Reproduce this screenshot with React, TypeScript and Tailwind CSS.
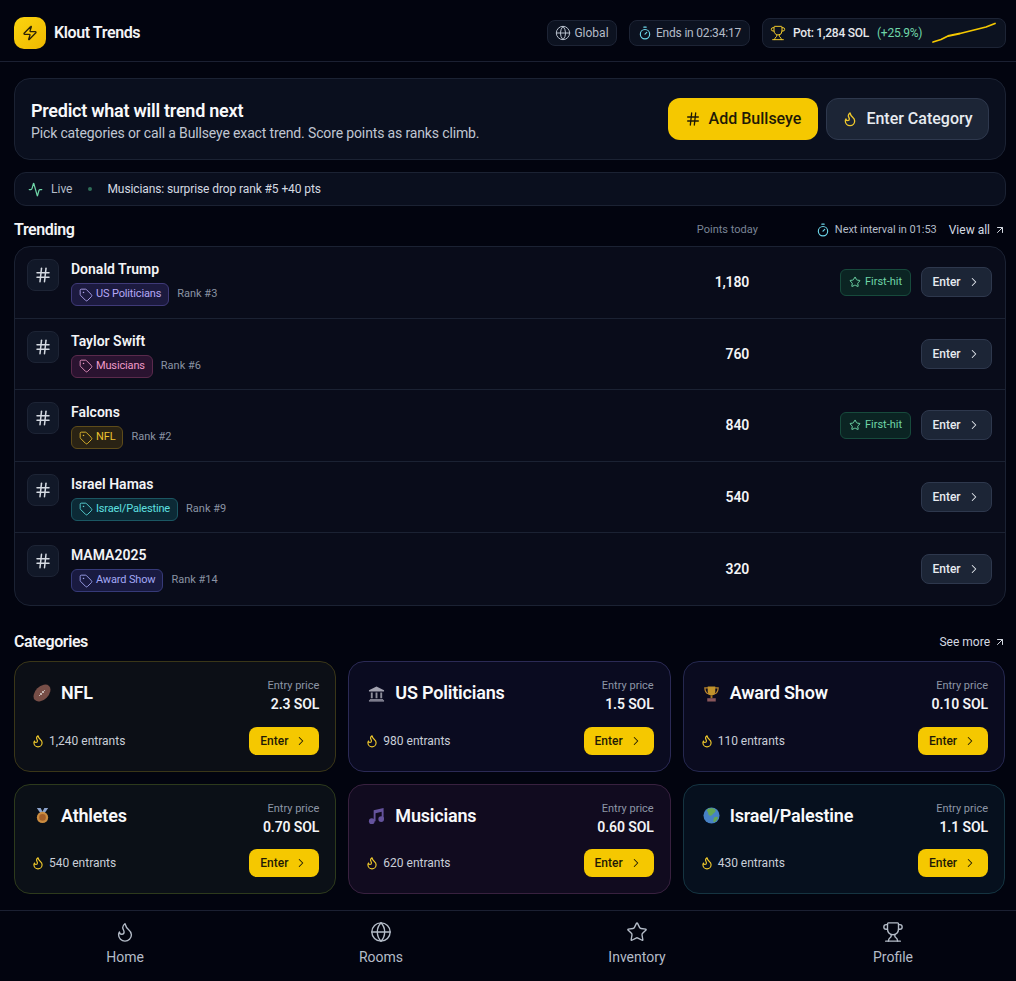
import { Activity, ArrowUpRight, ChevronRight, Flame, Globe, Hash, Star, Tag, Timer, Trophy, Zap } from "lucide-react";
import type { ReactNode } from "react";

const trends = [
  { name: "Donald Trump", cat: "US Politicians", chip: "border-[#3f3a78] bg-[#1c1a3f] text-[#b5a8f5]", rank: 3, pts: "1,180", first: true },
  { name: "Taylor Swift", cat: "Musicians", chip: "border-[#5a2a4c] bg-[#2a1330] text-[#f09ac8]", rank: 6, pts: "760", first: false },
  { name: "Falcons", cat: "NFL", chip: "border-[#5e4c1a] bg-[#2a2314] text-[#eec22f]", rank: 2, pts: "840", first: true },
  { name: "Israel Hamas", cat: "Israel/Palestine", chip: "border-[#1b5763] bg-[#0c2a36] text-[#5ee0e0]", rank: 9, pts: "540", first: false },
  { name: "MAMA2025", cat: "Award Show", chip: "border-[#363a78] bg-[#191a40] text-[#a3a8f5]", rank: 14, pts: "320", first: false },
];

function Football() {
  return (
    <svg width="18" height="18" viewBox="0 0 18 18" className="opacity-85">
      <ellipse cx="9" cy="9" rx="10" ry="6.6" fill="#8a5a50" transform="rotate(-45 9 9)" />
      <path d="M6 12l6-6M7 9l2 2M9 7l2 2" stroke="#e6d3cc" strokeWidth="1" fill="none" />
    </svg>
  );
}

function Bank() {
  return (
    <svg width="17" height="17" viewBox="0 0 18 18" className="opacity-90">
      <path d="M9 1.500L17 5.500V7H1V5.500z" fill="#b4b4c0" />
      <path d="M3 8h2v6H3zM8 8h2v6H8zM13 8h2v6h-2z" fill="#9c9ca8" />
      <path d="M2 15h14v1H2zM1 16.200h16v1.300H1z" fill="#b4b4c0" />
    </svg>
  );
}

function Cup() {
  return (
    <svg width="17" height="17" viewBox="0 0 18 18" className="opacity-80">
      <path d="M2 3h14c0 4-1.500 6-4 6.500H6C3.500 9 2 7 2 3z" fill="none" stroke="#e0a030" strokeWidth="1.400" />
      <path d="M5 1.500h8v5c0 3-2 4.500-4 4.500S5 9.500 5 6.500z" fill="#efb62f" />
      <path d="M8 11h2v3H8z" fill="#c98b22" />
      <path d="M4.500 14h9v3.500h-9z" fill="#a8696a" />
    </svg>
  );
}

function Medal() {
  return (
    <svg width="17" height="17" viewBox="0 0 18 18" className="opacity-90">
      <path d="M3 1h4l3 6H7zM15 1h-4L8 7h3z" fill="#9ab4e0" />
      <circle cx="9" cy="11" r="6" fill="#e09a45" />
      <circle cx="9" cy="11" r="3.500" fill="#b5682a" />
    </svg>
  );
}

function Notes() {
  return (
    <svg width="17" height="17" viewBox="0 0 18 18" className="opacity-80">
      <path d="M6 3.500L16.500 1v11.500h-2V5L8 6.500V15H6z" fill="#7a66bd" />
      <circle cx="4" cy="15" r="3" fill="#7a66bd" />
      <circle cx="14" cy="12.800" r="3" fill="#7a66bd" />
    </svg>
  );
}

function Earth() {
  return (
    <svg width="17" height="17" viewBox="0 0 18 18" className="opacity-90">
      <circle cx="9" cy="9" r="8.500" fill="#4f8fd8" />
      <path d="M5 2c2-1 6-1 8 1 1 2-1 3-2 4s-2 3-4 2-1-3-2-4-1-2 0-3zM12 11c1-1 3-1 4 0-1 3-3 5-5 5 0-2 0-4 1-5z" fill="#6fb85a" />
    </svg>
  );
}

const cats: { icon: ReactNode; name: string; price: string; count: string; card: string }[] = [
  { icon: <Football />, name: "NFL", price: "2.3 SOL", count: "1,240", card: "border-[#3a3618] bg-[#0c0f16]" },
  { icon: <Bank />, name: "US Politicians", price: "1.5 SOL", count: "980", card: "border-[#2b2a55] bg-[#0a0b20]" },
  { icon: <Cup />, name: "Award Show", price: "0.10 SOL", count: "110", card: "border-[#25284f] bg-[#0a0b1f]" },
  { icon: <Medal />, name: "Athletes", price: "0.70 SOL", count: "540", card: "border-[#2d3a1c] bg-[#0b1017]" },
  { icon: <Notes />, name: "Musicians", price: "0.60 SOL", count: "620", card: "border-[#38213f] bg-[#110b1f]" },
  { icon: <Earth />, name: "Israel/Palestine", price: "1.1 SOL", count: "430", card: "border-[#153441] bg-[#06101e]" },
];

const nav = [
  { label: "Home", Icon: Flame },
  { label: "Rooms", Icon: Globe },
  { label: "Inventory", Icon: Star },
  { label: "Profile", Icon: Trophy },
];

export default function App() {
  return (
    <div className="flex h-[981px] flex-col overflow-hidden bg-[#02040f] font-['Roboto',sans-serif] text-white">
      <header className="flex h-[62px] shrink-0 items-center justify-between border-b border-[#1b2032] pl-3.5 pr-2.5 pt-1">
        <div className="flex items-center gap-2">
          <div className="flex h-8 w-8 items-center justify-center rounded-[10px] bg-gradient-to-br from-[#fbd50f] to-[#efb800]">
            <Zap size={16} className="text-[#2a2208]" />
          </div>
          <span className="text-base font-semibold tracking-[-0.4px] text-[#f3f4f6]">Klout Trends</span>
        </div>
        <div className="flex items-center gap-3">
          <div className="flex h-[26px] w-[70px] items-center justify-center gap-[3px] rounded-lg border border-[#1d2435] bg-[#0c1220] text-xs text-[#b4bcc8]">
            <Globe size={16} strokeWidth={1.5} className="text-[#b8c0cc]" />
            Global
          </div>
          <div className="flex h-[26px] w-[121px] items-center justify-center gap-1 rounded-lg border border-[#1d2435] bg-[#0c1220] text-xs tracking-[-0.2px] text-[#b4bcc8]">
            <Timer size={14} className="text-[#6cd5e8]" />
            Ends in 02:34:17
          </div>
          <div className="flex h-[30px] w-[244px] items-center rounded-lg border border-[#1d2435] bg-[#0c1220] pl-[7px] pr-2 text-xs tracking-[-0.25px]">
            <Trophy size={16} strokeWidth={1.5} className="mr-[7px] text-[#f0c92c]" />
            <span className="font-medium text-[#e5e7eb]">Pot: 1,284 SOL</span>
            <span className="ml-2 text-[#6fd6a8]">(+25.9%)</span>
            <svg width="66" height="22" viewBox="0 0 66 22" className="ml-auto" fill="none">
              <path d="M2 20l8-2.500 7-3.500 12-2.500 14-3.500 12-3 9-3.500" stroke="#f5c800" strokeWidth="1.800" strokeLinecap="round" strokeLinejoin="round" />
            </svg>
          </div>
        </div>
      </header>

      <main className="flex-1 pl-3.5 pr-2.5 pt-4">
        <section className="flex h-[82px] items-center justify-between rounded-2xl border border-[#1b2233] bg-[#0a0f1e] pl-4 pr-4">
          <div className="pt-1">
            <h1 className="text-lg font-semibold leading-6 tracking-[-0.25px] text-[#f8f9fb]">Predict what will trend next</h1>
            <p className="text-sm leading-5 tracking-[-0.14px] text-[#c0c6d2]">Pick categories or call a Bullseye exact trend. Score points as ranks climb.</p>
          </div>
          <div className="flex gap-2">
            <button className="flex h-[42px] w-[150px] items-center justify-center gap-2 rounded-xl bg-[#f5c800] text-base font-medium text-[#1f1a06]">
              <Hash size={16} />
              Add Bullseye
            </button>
            <button className="flex h-[42px] w-[163px] items-center justify-center gap-2 rounded-xl border border-[#2e384d] bg-[#1c2536] text-base font-medium text-[#e7ebf0]">
              <Flame size={16} className="text-[#f0c92c]" />
              Enter Category
            </button>
          </div>
        </section>

        <div className="mt-3 flex h-[34px] items-center rounded-xl border border-[#1b2233] bg-[#0a0f1e] pl-[13px] text-xs">
          <Activity size={15} className="text-[#6fd6a8]" />
          <span className="ml-2 text-[#b4bcc8]">Live</span>
          <span className="ml-4 h-1 w-1 rounded-full bg-[#2f6d58]" />
          <span className="ml-[15px] tracking-[-0.1px] text-[#d5dae2]">Musicians: surprise drop rank #5 +40 pts</span>
        </div>

        <div className="mt-2.5 flex h-[28px] items-center">
          <h2 className="text-base font-semibold tracking-[-0.4px] text-[#f3f4f6]">Trending</h2>
          <span className="ml-auto text-[11px] text-[#7a8496]">Points today</span>
          <Timer size={14} className="ml-[58px] text-[#6cd5e8]" />
          <span className="ml-[5px] text-[11px] tracking-[-0.05px] text-[#b4bcc8]">Next interval in 01:53</span>
          <span className="ml-3 text-xs text-[#d5dae2]">View all</span>
          <ArrowUpRight size={12} className="ml-1 text-[#d5dae2]" />
        </div>

        <div className="mt-0.5 rounded-2xl border border-[#1b2233] bg-[#090c1a]">
          {trends.map((t) => (
            <div key={t.name} className="flex h-[71.5px] border-b border-[#1b2233] pl-3 pr-[13px] last:h-[72px] last:border-b-0">
              <div className="mt-3 flex h-8 w-8 items-center justify-center rounded-lg border border-[#1d2435] bg-[#111828]">
                <Hash size={18} className="text-[#d5dae2]" />
              </div>
              <div className="ml-3 flex-1 pt-[12px]">
                <div className="text-sm font-semibold leading-5 text-[#f3f4f6]">{t.name}</div>
                <div className="mt-1 flex items-center gap-2">
                  <span className={`flex h-[23px] items-center gap-[3px] rounded-md border px-[7px] text-[11px] tracking-[-0.15px] ${t.chip}`}>
                    <Tag size={14} strokeWidth={1.5} />
                    {t.cat}
                  </span>
                  <span className="text-[11px] text-[#8a93a3]">Rank #{t.rank}</span>
                </div>
              </div>
              <div className="w-20 self-center text-right text-sm font-semibold tracking-[-0.2px] text-[#f3f4f6]">{t.pts}</div>
              <div className="flex w-[243px] items-center justify-end gap-2.5 self-center">
                {t.first && (
                  <span className="flex h-[27px] w-[71px] items-center justify-center gap-1 rounded-md border border-[#174a3c] bg-[#0b2423] text-[11px] text-[#6fd6a8]">
                    <Star size={12} />
                    First-hit
                  </span>
                )}
                <button className="flex h-[30px] w-[71px] items-center justify-center gap-1.5 rounded-lg border border-[#2e384d] bg-[#1c2536] text-xs font-medium text-[#e7ebf0]">
                  Enter
                  <ChevronRight size={14} strokeWidth={1.75} />
                </button>
              </div>
            </div>
          ))}
        </div>

        <div className="mt-[22px] flex h-[28px] items-center">
          <h2 className="text-base font-semibold tracking-[-0.4px] text-[#f3f4f6]">Categories</h2>
          <span className="ml-auto text-xs text-[#d5dae2]">See more</span>
          <ArrowUpRight size={12} className="ml-1 text-[#d5dae2]" />
        </div>

        <div className="mt-[5px] grid grid-cols-3 gap-3 pr-px">
          {cats.map((c) => (
            <div key={c.name} className={`flex h-[110.5px] flex-col justify-between rounded-2xl border px-4 pb-4 pt-4 ${c.card}`}>
              <div className="flex items-start justify-between">
                <div className="mt-[3px] flex items-center gap-[10px]">
                  <span className="flex h-5 w-5 items-center justify-end">{c.icon}</span>
                  <span className="text-lg font-semibold leading-6 tracking-[-0.2px] text-[#f8f9fb]">{c.name}</span>
                </div>
                <div className="text-right">
                  <div className="text-[11px] leading-4 text-[#8d96a6]">Entry price</div>
                  <div className="text-sm font-semibold leading-5 tracking-[-0.1px] text-[#f3f4f6]">{c.price}</div>
                </div>
              </div>
              <div className="flex items-center">
                <Flame size={14} className="text-[#f0c92c]" />
                <span className="ml-1 text-xs text-[#c9ced8]">{c.count} entrants</span>
                <button className="ml-auto flex h-7 w-[70px] items-center justify-center gap-1.5 rounded-lg bg-[#f5c800] text-xs font-medium text-[#1f1a06]">
                  Enter
                  <ChevronRight size={14} strokeWidth={1.75} />
                </button>
              </div>
            </div>
          ))}
        </div>
      </main>

      <nav className="flex h-[71px] shrink-0 items-center justify-between border-t border-[#1b2032] pb-1 pl-[75px] pr-[73px]">
        {nav.map(({ label, Icon }) => (
          <div key={label} className="flex w-[100px] flex-col items-center gap-1 text-[#b4bcc8]">
            <Icon size={22} strokeWidth={1.5} />
            <span className="text-sm leading-5">{label}</span>
          </div>
        ))}
      </nav>
    </div>
  );
}
